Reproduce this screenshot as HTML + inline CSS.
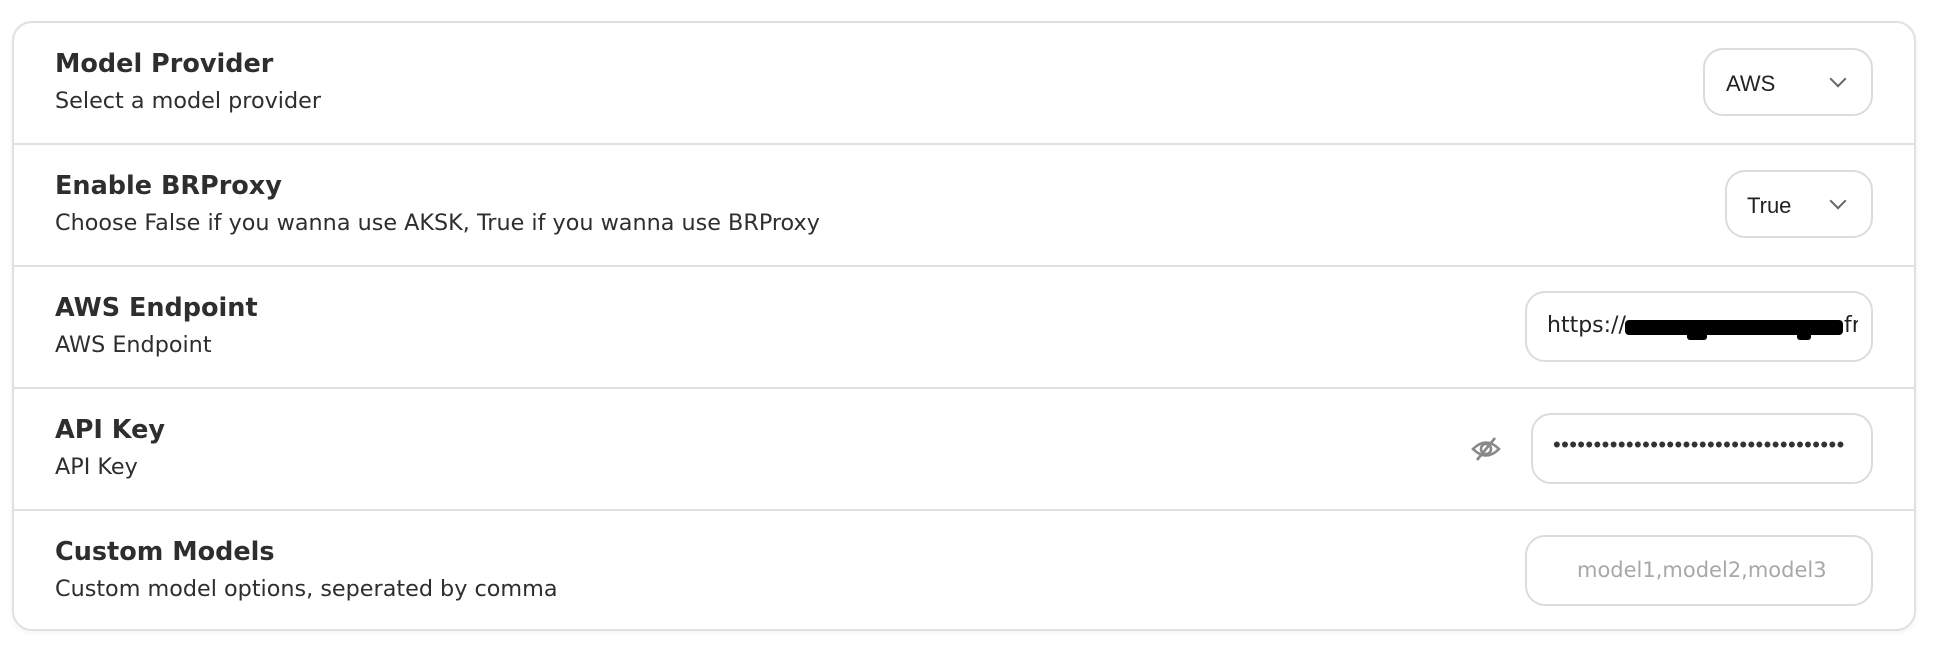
<!DOCTYPE html>
<html><head><meta charset="utf-8"><style>
*{box-sizing:border-box;margin:0;padding:0}
body{width:1942px;height:648px;background:#fff;font-family:"DejaVu Sans","Liberation Sans",sans-serif;color:#2b2b2b;position:relative;overflow:hidden}
.card{position:absolute;left:12px;top:21px;width:1904px;height:610px;border:2px solid #e0e0e0;border-radius:20px;box-shadow:0 2px 6px rgba(0,0,0,0.05)}
.row{position:absolute;left:0;width:100%;height:122px;border-bottom:2px solid #e0e0e0}
.row:last-child{border-bottom:none}
.t{position:absolute;left:41px;top:26px;font-size:25.5px;font-weight:bold;color:#2e2e2e}
.s{position:absolute;left:41px;top:65px;font-size:22.3px;color:#2e2e2e}
.box{position:absolute;border:2px solid #dcdcdc;border-radius:20px;background:#fff;font-size:22px;font-family:"Liberation Sans",sans-serif;color:#222}
.chev{position:absolute;width:12px;height:12px;border-right:2.5px solid #666;border-bottom:2.5px solid #666;transform:rotate(45deg)}
</style></head><body>
<div class="card">
 <div class="row" style="top:0">
  <div class="t">Model Provider</div><div class="s">Select a model provider</div>
 </div>
 <div class="row" style="top:122px">
  <div class="t">Enable BRProxy</div><div class="s">Choose False if you wanna use AKSK, True if you wanna use BRProxy</div>
 </div>
 <div class="row" style="top:244px">
  <div class="t">AWS Endpoint</div><div class="s">AWS Endpoint</div>
 </div>
 <div class="row" style="top:366px">
  <div class="t">API Key</div><div class="s">API Key</div>
 </div>
 <div class="row" style="top:488px">
  <div class="t">Custom Models</div><div class="s">Custom model options, seperated by comma</div>
 </div>
</div>

<div class="box" style="left:1703px;top:48px;width:170px;height:68px">
 <span style="position:absolute;left:21px;top:21px">AWS</span>
 <div class="chev" style="left:127px;top:23px"></div>
</div>
<div class="box" style="left:1725px;top:170px;width:148px;height:68px">
 <span style="position:absolute;left:20px;top:21px">True</span>
 <div class="chev" style="left:105px;top:23px"></div>
</div>

<div class="box" style="left:1525px;top:291px;width:348px;height:71px;overflow:hidden;font-family:'DejaVu Sans',sans-serif">
 <span style="position:absolute;left:20px;top:20px;white-space:nowrap">https://</span>
 <div style="position:absolute;left:98px;top:27px;width:218px;height:15px;background:#000;border-radius:4px"></div>
 <div style="position:absolute;left:160px;top:38px;width:20px;height:9px;background:#000;border-radius:3px"></div>
 <div style="position:absolute;left:270px;top:38px;width:14px;height:9px;background:#000;border-radius:3px"></div>
 <span style="position:absolute;left:317px;top:20px">fr</span>
 <div style="position:absolute;left:331px;top:0;width:17px;height:70px;background:#fff"></div>
</div>

<svg style="position:absolute;left:1471px;top:435px" width="30" height="28" viewBox="0 0 30 28">
 <path d="M2 14 Q15 1 28 14 Q15 27 2 14Z" fill="none" stroke="#888" stroke-width="2.6"/>
 <circle cx="15" cy="14" r="5" fill="none" stroke="#888" stroke-width="2.6"/>
 <line x1="6" y1="25" x2="24" y2="3" stroke="#888" stroke-width="2.6"/>
</svg>
<div class="box" style="left:1531px;top:413px;width:342px;height:71px">
 <span style="position:absolute;left:20px;top:17px;letter-spacing:0.4px;font-size:22px;color:#333;white-space:nowrap">••••••••••••••••••••••••••••••••••••</span>
</div>

<div class="box" style="left:1525px;top:535px;width:348px;height:71px">
 <span style="position:absolute;left:50px;top:21px;color:#a8a8a8;font-family:'DejaVu Sans',sans-serif;font-size:21px">model1,model2,model3</span>
</div>
</body></html>
